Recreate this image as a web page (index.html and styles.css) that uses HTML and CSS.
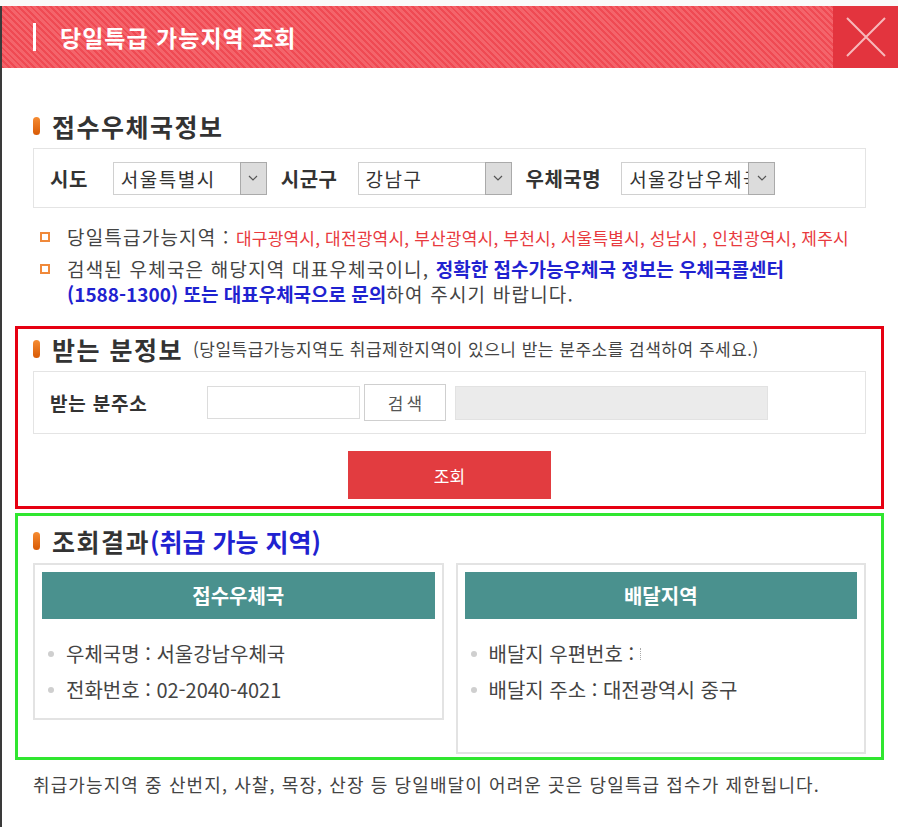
FILE: index.html
```html
<!DOCTYPE html>
<html lang="ko">
<head>
    <meta charset="UTF-8">
    <meta name="viewport" content="width=device-width, initial-scale=1.0">
    <title>당일특급 가능지역 조회</title>
    <link rel="stylesheet" href="styles.css">
</head>
<body>
    <div class="popup">
        <header class="popup-header">
            <h1 class="popup-title"><span class="title-bar"></span>당일특급 가능지역 조회</h1>
            <button class="close-btn" aria-label="닫기">
                <svg width="40" height="40" viewBox="0 0 40 40"><path d="M1 1L39 39M39 1L1 39" stroke="#f7b8bb" stroke-width="2" fill="none"/></svg>
            </button>
        </header>

        <div class="popup-body">
            <section class="section">
                <h2 class="sec-title"><span class="pill"></span>접수우체국정보</h2>
                <div class="filter-box">
                    <span class="f-label first">시도</span>
                    <div class="select">
                        <span class="select-text">서울특별시</span>
                        <span class="select-arrow"><svg width="10" height="6" viewBox="0 0 10 6"><polyline points="1,1 5,5 9,1" fill="none" stroke="#555" stroke-width="1.2"/></svg></span>
                    </div>
                    <span class="f-label">시군구</span>
                    <div class="select">
                        <span class="select-text">강남구</span>
                        <span class="select-arrow"><svg width="10" height="6" viewBox="0 0 10 6"><polyline points="1,1 5,5 9,1" fill="none" stroke="#555" stroke-width="1.2"/></svg></span>
                    </div>
                    <span class="f-label">우체국명</span>
                    <div class="select">
                        <span class="select-text">서울강남우체국</span>
                        <span class="select-arrow"><svg width="10" height="6" viewBox="0 0 10 6"><polyline points="1,1 5,5 9,1" fill="none" stroke="#555" stroke-width="1.2"/></svg></span>
                    </div>
                </div>

                <ul class="notice">
                    <li class="nowrap"><span class="sq"></span><p>당일특급가능지역 : <span class="red">대구광역시, 대전광역시, 부산광역시, 부천시, 서울특별시, 성남시 , 인천광역시, 제주시</span></p></li>
                    <li><span class="sq"></span><p>검색된 우체국은 해당지역 대표우체국이니, <span class="blue">정확한 접수가능우체국 정보는 우체국콜센터<br>(1588-1300) 또는 대표우체국으로 문의</span>하여 주시기 바랍니다.</p></li>
                </ul>
            </section>

            <section class="section boxed red-box">
                <h2 class="sec-title"><span class="pill"></span>받는 분정보<span class="sub">(당일특급가능지역도 취급제한지역이 있으니 받는 분주소를 검색하여 주세요.)</span></h2>
                <div class="addr-box">
                    <span class="addr-label">받는 분주소</span>
                    <input class="addr-input" type="text">
                    <button class="search-btn">검색</button>
                    <div class="addr-field"></div>
                </div>
                <div class="btn-row">
                    <button class="lookup-btn">조회</button>
                </div>
            </section>

            <section class="section boxed green-box">
                <h2 class="sec-title"><span class="pill"></span>조회결과<span class="blue">(취급 가능 지역)</span></h2>
                <div class="cards">
                    <div class="card">
                        <div class="card-head">접수우체국</div>
                        <ul class="card-list">
                            <li><span class="dot"></span>우체국명 : 서울강남우체국</li>
                            <li><span class="dot"></span>전화번호 : 02-2040-4021</li>
                        </ul>
                    </div>
                    <div class="card">
                        <div class="card-head">배달지역</div>
                        <ul class="card-list tall">
                            <li><span class="dot"></span>배달지 우편번호 :<span class="cut"></span></li>
                            <li><span class="dot"></span>배달지 주소 : 대전광역시 중구</li>
                        </ul>
                    </div>
                </div>
            </section>

            <p class="footer-note">취급가능지역 중 산번지, 사찰, 목장, 산장 등 당일배달이 어려운 곳은 당일특급 접수가 제한됩니다.</p>
        </div>
    </div>
</body>
</html>
```

FILE: styles.css
```css
body {
    margin: 0;
    font-family: "Noto Sans CJK KR", "Noto Sans", sans-serif;
    background-color: #fafafa;
    color: #444;
}

.popup {
    margin-top: 6px;
    min-height: 821px;
    border-left: 2px solid #3a3a3a;
    background-color: #fff;
}

/* header */
.popup-header {
    display: flex;
    height: 62px;
    background: repeating-linear-gradient(45deg, #ef4a53 0 2px, #f4646b 2px 4.5px);
}

.popup-title {
    flex: 1;
    display: flex;
    align-items: center;
    margin: 0;
    padding-left: 31px;
    font-size: 23px;
    font-weight: bold;
    letter-spacing: 1px;
    color: #fff;
}

.title-bar {
    width: 3px;
    height: 28px;
    margin-right: 24px;
    background-color: #fff;
}

.close-btn {
    display: flex;
    align-items: center;
    justify-content: center;
    width: 65px;
    height: 62px;
    padding: 0;
    border: none;
    background-color: #e3343e;
    cursor: pointer;
}

/* body */
.popup-body {
    padding: 43px 14px 0 13px;
}

.section {
    padding: 0 18px;
}

.sec-title {
    display: flex;
    align-items: center;
    margin: 0;
    font-size: 25px;
    line-height: 30px;
    font-weight: bold;
    letter-spacing: 1.5px;
    color: #333;
    white-space: nowrap;
}

.sec-title .blue {
    letter-spacing: 0;
}

.pill {
    width: 7px;
    height: 18px;
    margin-right: 12px;
    border-radius: 4px;
    background: linear-gradient(#f68c32, #d85a05);
}

.sec-title .sub {
    margin-left: 10px;
    font-size: 17px;
    font-weight: normal;
    letter-spacing: 0.5px;
    color: #444;
}

.filter-box {
    display: flex;
    align-items: center;
    height: 60px;
    margin-top: 7px;
    padding-left: 16px;
    box-sizing: border-box;
    border: 1px solid #e4e4e4;
}

.f-label {
    margin-right: 20px;
    font-size: 20px;
    font-weight: bold;
    letter-spacing: 0.5px;
    color: #333;
}

.f-label.first {
    margin-right: 25px;
}

.select {
    display: flex;
    width: 154px;
    height: 33px;
    margin-right: 14px;
    box-sizing: border-box;
    border: 1px solid #d0d0d0;
    background-color: #fff;
}

.select-text {
    flex: 1;
    overflow: hidden;
    white-space: nowrap;
    padding-left: 7px;
    font-size: 19px;
    line-height: 31px;
    letter-spacing: 1.5px;
    color: #333;
}

.select-arrow {
    display: flex;
    align-items: center;
    justify-content: center;
    flex: none;
    width: 25px;
    border: 1px solid #aaa;
    margin: -1px -1px -1px 0;
    background-color: #dcdcdc;
}

.notice {
    list-style: none;
    margin: 16px 0 0;
    padding: 0;
}

.notice li {
    display: flex;
    font-size: 19px;
    line-height: 25px;
    letter-spacing: 1.2px;
    color: #444;
}

.notice li + li {
    margin-top: 6px;
}

.notice p {
    margin: 0;
}

.nowrap {
    white-space: nowrap;
}

.sq {
    flex: none;
    width: 10px;
    height: 10px;
    margin: 8px 17px 0 7px;
    box-sizing: border-box;
    border: 2px solid #f0893a;
}

.red {
    font-size: 17px;
    letter-spacing: 0.2px;
    color: #e83a3e;
}

.blue {
    font-weight: bold;
    color: #1f22d0;
}

.notice .blue {
    letter-spacing: 0;
}

/* boxed sections */
.boxed {
    padding-left: 15px;
    padding-right: 15px;
}

.red-box {
    margin-top: 20px;
    padding-top: 5px;
    padding-bottom: 7px;
    border: 3px solid #e60012;
}

.green-box {
    margin-top: 4px;
    padding-top: 10px;
    padding-bottom: 3px;
    border: 3px solid #30e630;
}

.addr-box {
    display: flex;
    align-items: center;
    height: 63px;
    margin-top: 7px;
    padding-left: 16px;
    box-sizing: border-box;
    border: 1px solid #e4e4e4;
}

.addr-label {
    width: 157px;
    font-size: 19px;
    font-weight: bold;
    letter-spacing: 0.8px;
    color: #333;
}

.addr-input {
    width: 153px;
    height: 33px;
    margin: 0;
    box-sizing: border-box;
    border: 1px solid #dcdcdc;
}

.search-btn {
    width: 82px;
    height: 37px;
    margin-left: 4px;
    padding: 0 0 0 3px;
    border: 1px solid #cfcfcf;
    background-color: #fff;
    font-family: inherit;
    font-size: 17px;
    letter-spacing: 3px;
    color: #555;
}

.addr-field {
    width: 313px;
    height: 34px;
    margin-left: 9px;
    box-sizing: border-box;
    border: 1px solid #e2e2e2;
    background-color: #ebebeb;
}

.btn-row {
    display: flex;
    justify-content: center;
    margin-top: 17px;
}

.lookup-btn {
    width: 203px;
    height: 48px;
    border: none;
    background-color: #e23c40;
    font-family: inherit;
    font-size: 17px;
    color: #fff;
    cursor: pointer;
}

/* result cards */
.cards {
    display: flex;
    align-items: flex-start;
    gap: 12px;
    margin-top: 7px;
}

.card {
    flex: 1;
    padding: 7px 7px 0;
    border: 2px solid #e3e3e3;
}

.card-head {
    display: flex;
    align-items: center;
    justify-content: center;
    height: 47px;
    background-color: #4a918e;
    font-size: 20px;
    font-weight: bold;
    color: #fff;
}

.card-list {
    list-style: none;
    margin: 0;
    padding: 17px 0 10px 6px;
}

.card-list.tall {
    padding-bottom: 44px;
}

.card-list li {
    display: flex;
    align-items: center;
    font-size: 20px;
    line-height: 36px;
    color: #444;
}

.dot {
    width: 6px;
    height: 6px;
    margin-right: 12px;
    border-radius: 50%;
    background-color: #cfcfcf;
}

.cut {
    width: 0;
    height: 12px;
    margin-left: 6px;
    border-left: 1px dotted #aaa;
}

.footer-note {
    margin: 12px 0 0;
    padding: 0 18px;
    font-size: 18px;
    line-height: 25px;
    letter-spacing: 1.1px;
    color: #444;
}
```
